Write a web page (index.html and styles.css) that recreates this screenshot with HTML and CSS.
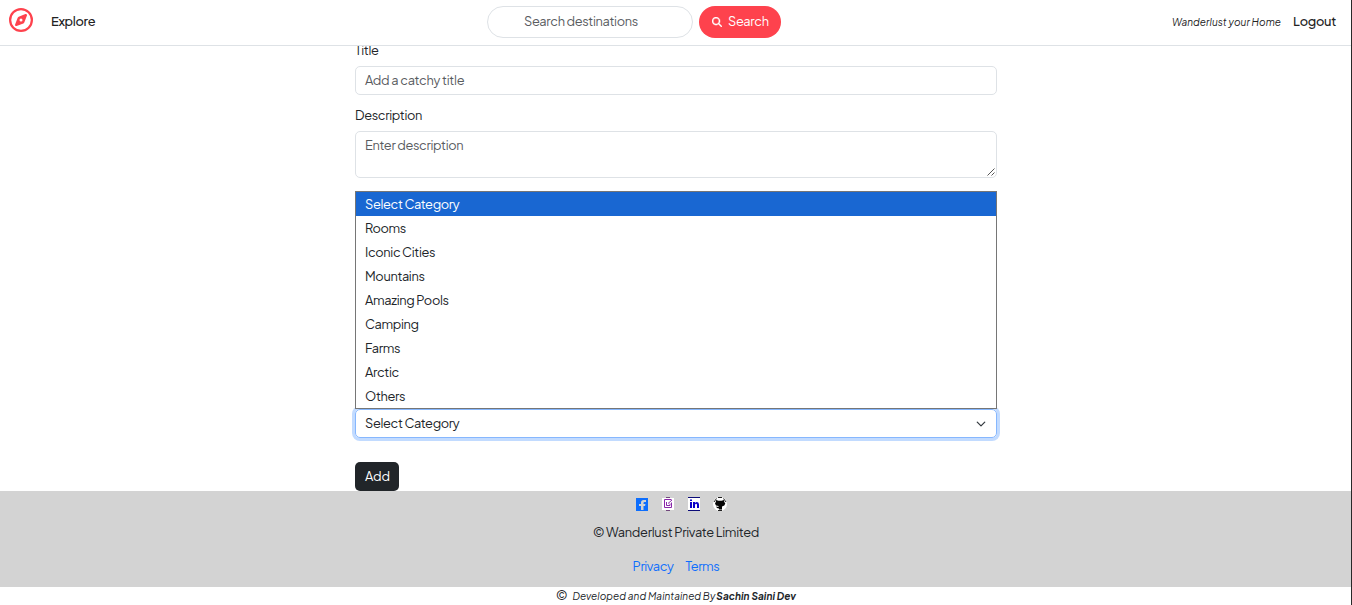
FILE: index.html
```html
<!DOCTYPE html>
<html lang="en">
<head>
<meta charset="utf-8">
<title>Wanderlust</title>
<link rel="stylesheet" href="styles.css">
</head>
<body>
<nav class="navbar">
  <div class="nav-left">
    <svg class="brand" viewBox="0 0 512 512"><path fill="#fe424d" fill-rule="evenodd" d="M256 0a256 256 0 1 0 0 512 256 256 0 0 0 0-512zm0 48a208 208 0 1 1 0 416 208 208 0 0 1 0-416zM383 162c8-20-12-40-32-32l-144 55a38 38 0 0 0-22 22l-55 144c-8 20 12 40 32 32l144-55a38 38 0 0 0 22-22zM256 224a32 32 0 1 1 0 64 32 32 0 0 1 0-64z"/></svg>
    <a class="explore">Explore</a>
  </div>
  <form class="search">
    <div class="search-input"><span>Search destinations</span></div>
    <div class="search-btn"><svg viewBox="0 0 512 512"><path fill="#fff" stroke="#fff" stroke-width="16" fill-rule="evenodd" d="M416 208c0 46-15 88-40 123l127 126a32 32 0 0 1-46 46L331 376A208 208 0 1 1 416 208zM208 352a144 144 0 1 0 0-288 144 144 0 0 0 0 288z"/></svg><span>Search</span></div>
  </form>
  <div class="nav-right"><i class="tagline">Wanderlust your Home</i><a class="logout">Logout</a></div>
</nav>
<main class="form">
  <div class="label"><span>Title</span></div>
  <div class="field"><span class="catchy">Add a catchy title</span></div>
  <div class="label"><span>Description</span></div>
  <div class="field area"><span>Enter description</span>
    <svg class="grip" viewBox="0 0 8 8"><path d="M.5 7.500l7-7M4.500 7.500l3-3" stroke="#444" stroke-width=".9" fill="none"/></svg>
  </div>
  <div class="options">
    <div class="option active">Select Category</div>
    <div class="option">Rooms</div>
    <div class="option">Iconic Cities</div>
    <div class="option">Mountains</div>
    <div class="option">Amazing Pools</div>
    <div class="option">Camping</div>
    <div class="option">Farms</div>
    <div class="option">Arctic</div>
    <div class="option">Others</div>
  </div>
  <div class="select"><span>Select Category</span><svg viewBox="0 0 16 16"><path fill="none" stroke="#343a40" stroke-linecap="round" stroke-linejoin="round" stroke-width="2" d="m2 5 6 6 6-6"/></svg></div>
  <div class="add">Add</div>
</main>
<footer class="footer">
  <div class="socials">
    <svg viewBox="0 0 14 14"><path fill="#0d6efd" d="M1 1h12v13H1z"/><path fill="#d3d3d3" d="M6 13V9H4V7h2V5.500Q6 3 8.500 3H11v2H9.500Q8.500 5 8.500 6v1h2L10 9H8.500v4z"/></svg>
    <svg viewBox="0 0 14 14"><path fill="#fff" d="M1 1h12v12H1z"/><path stroke="#8927aa" fill="none" d="M10.500 5.500v5h-7v-8h7M5.500 5v3.500h3.500V6.500M7 6.500L11 3"/><path stroke="#71477c" d="M5 .5h4M5 13.500h4"/></svg>
    <svg viewBox="0 0 14 14"><path fill="#fff" d="M1 1h12v12H1z"/><path stroke="#0b0b78" d="M1 .5h12M1 13.500h12"/><path fill="#0a00c8" d="M3 5h2v6H3zM3 2.500h2V4H3zM6 5h2v1q.7-1 2-1 2 0 2 2.500V11h-2V8q0-1.300-.9-1.300T8 8v3H6z"/></svg>
    <svg viewBox="0 0 14 14"><circle cx="7" cy="7" r="7" fill="#fff"/><path fill="none" stroke="#222" d="M5 .5h4M5 13.500h4M1 5l2.500-3.500M13 5l-2.500-3.500"/><path fill="#050505" d="M3 3l2.500.7h3L11 3l.3 2 1 1.500-1 2L9 9.500V12.500H6v-1l-2-.5-1-1.500 2.500.5V9L3 8.500 2 6.500l.8-1.500z"/></svg>
  </div>
  <div class="company">© Wanderlust Private Limited</div>
  <div class="links"><a>Privacy</a><a>Terms</a></div>
</footer>
<div class="credit"><span class="copy">©</span><i class="dev">Developed and Maintained By</i><i class="name">Sachin Saini Dev</i></div>
<div class="edge"></div>
</body>
</html>
```
FILE: styles.css
```css
* { box-sizing: border-box; }
body {
  margin: 0; height: 605px; overflow: hidden; background: #fff; color: #212529;
  font: 12.8px/19px "Plus Jakarta Sans", Inter, "Liberation Sans", sans-serif;
  letter-spacing: -.34px;
}
span, i, a { white-space: nowrap; }
svg { display: block; flex: none; }
.navbar {
  position: relative; z-index: 1; height: 46px; background: #fff; border-bottom: 1px solid #dee2e6;
  display: grid; grid-template-columns: 487px 294px 1fr;
}
.nav-left { display: flex; padding: 8px 0 0 9px; }
.brand { width: 24px; height: 24px; }
.explore { margin: 4px 0 0 18px; font-weight: 500; color: #222; }
.search { display: flex; gap: 6px; padding-top: 6px; }
.search-input { width: 206px; height: 32px; border: 1px solid #dee2e6; border-radius: 16px; padding: 5px 0 0 36px; color: #595c5f; }
.search-btn { width: 82px; height: 32px; border-radius: 16px; background: #fe424d; color: #fff; display: flex; align-items: center; padding-left: 13px; gap: 6px; }
.search-btn span { margin-bottom: 1px; }
.search-btn svg { width: 10px; height: 10px; }
.nav-right { display: flex; justify-content: flex-end; padding: 12px 16px 0 0; gap: 12px; color: #222; }
.tagline { font-size: 10px; line-height: 21px; letter-spacing: .07px; }
.logout { font-weight: 500; letter-spacing: -.27px; }
.form { width: 642px; margin: -5px 0 0 355px; }
.label { height: 19px; margin-bottom: 6px; }
.field { height: 29px; border: 1px solid #dee2e6; border-radius: 5px; padding: 4px 9px; margin-bottom: 11px; color: #595c5f; }
.catchy { letter-spacing: -.25px; }
.area { height: 47px; margin-bottom: 13px; display: flex; justify-content: space-between; align-items: flex-start; padding-right: 1px; }
.grip { width: 8px; height: 8px; align-self: flex-end; margin-bottom: -3px; }
.options { height: 218px; border: 1px solid #767676; background: #fff; position: relative; }
.option { height: 24px; padding: 3px 9px; }
.active { background: #1967d2; color: #fff; }
.select { height: 29px; border: 1px solid #86b7fe; border-radius: 5px; box-shadow: 0 0 0 3px #c2dbff; display: flex; align-items: center; justify-content: space-between; padding: 0 10px 0 9px; }
.select svg { width: 10px; height: 10px; }
.add { width: 44px; height: 29px; margin-top: 24px; background: #212529; color: #fff; border-radius: 5px; padding: 5px 0 0 10px; letter-spacing: -.1px; }
.footer { height: 96px; background: #d3d3d3; text-align: center; }
.socials { display: flex; justify-content: center; gap: 12.200px; padding: 6px 0 0 10px; }
.socials svg { width: 14px; height: 14px; }
.company { margin-top: 12px; letter-spacing: -.29px; }
.links { display: flex; justify-content: center; gap: 12px; margin-top: 15px; color: #0d6efd; letter-spacing: -.4px; }
.credit { height: 18px; display: flex; justify-content: center; font-size: 10px; line-height: 19px; letter-spacing: .06px; }
.copy { font-size: 12.800px; margin-right: 5px; line-height: 17px; }
.name { font-weight: 700; margin-left: 1px; }
.edge { position: absolute; z-index: 2; right: 0; top: 0; width: 1px; height: 605px; background: #292929; }
```
